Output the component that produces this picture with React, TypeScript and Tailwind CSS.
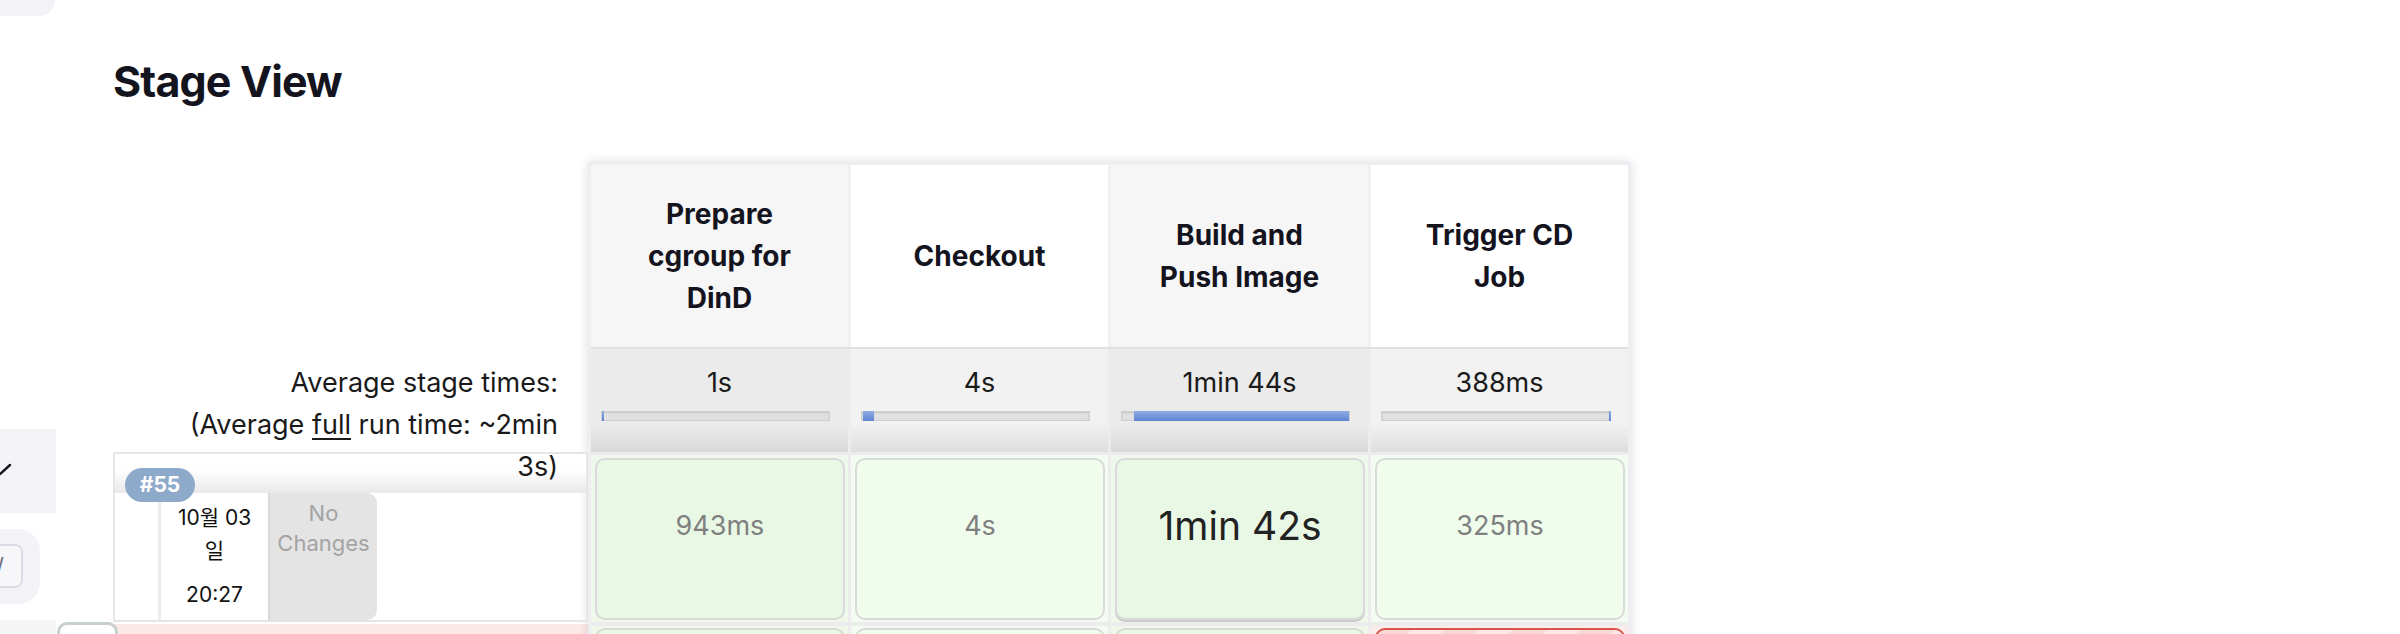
import React from 'react';

type Stage = {
  name: React.ReactNode;
  avg: string;
  barLeft: number;
  barWidth: number;
  run: string;
  big?: boolean;
  dark: boolean;
};

const STAGES: Stage[] = [
  { name: <>Prepare<br />cgroup for<br />DinD</>, avg: '1s', barLeft: 0, barWidth: 2, run: '943ms', dark: true },
  { name: 'Checkout', avg: '4s', barLeft: 1, barWidth: 11, run: '4s', dark: false },
  { name: <>Build and<br />Push Image</>, avg: '1min 44s', barLeft: 12, barWidth: 215, run: '1min 42s', big: true, dark: true },
  { name: <>Trigger CD<br />Job</>, avg: '388ms', barLeft: 227, barWidth: 2, run: '325ms', dark: false },
];

function Sidebar() {
  return (
    <aside className="flex w-[56px] shrink-0 flex-col">
      <div className="h-[16px] w-[55px] rounded-br-[16px] bg-[#f2f2f7]" />
      <div className="mt-[413px] flex h-[84px] w-[56px] items-center bg-[#f2f2f7]">
        <svg width="12" height="14" viewBox="0 0 12 14" className="-mt-[2px]">
          <path d="M0 11 L10 2" stroke="#14141f" strokeWidth="2.4" strokeLinecap="round" />
        </svg>
      </div>
      <div className="mt-[16px] h-[75px] w-[40px] rounded-r-[22px] bg-[#f2f2f7] pt-[15px]">
        <div className="flex h-[44px] w-[23px] items-center overflow-hidden rounded-r-[8px] border-2 border-l-0 border-[#dcdce6] bg-[#f7f7fa] text-[22px] leading-none text-[#6b6b7a]">
          <span className="-ml-[4px]">/</span>
        </div>
      </div>
      <div className="mt-[16px] h-[14px] w-[56px] bg-[#f5f5f5]" />
    </aside>
  );
}

function Bar({ left, width }: { left: number; width: number }) {
  return (
    <div className="relative ml-[10px] mt-[7px] h-[10px] w-[229px] border border-[#cfcfcf] bg-[#e0e0e0] shadow-[inset_0_1px_2px_rgba(0,0,0,0.12)]">
      <div
        className="absolute top-[-1px] h-[10px] bg-[linear-gradient(to_bottom,#8fabe2,#5f84d3)]"
        style={{ left, width }}
      />
    </div>
  );
}

export default function App() {
  return (
    <div className="relative h-[634px] w-[2400px] overflow-hidden bg-white font-['Inter','Noto_Sans_CJK_KR',sans-serif] text-[#14141f]">
      <div className="flex">
        <Sidebar />
        <main className="pl-[57px]">
          <h2 className="mt-[53px] text-[43px] font-bold leading-[56px] tracking-[-0.02em]">Stage View</h2>

          <div className="mt-[53px] flex items-start">
            {/* left label column */}
            <div className="w-[475px] shrink-0">
              <div className="h-[185px]" />
              <div className="relative z-10 h-[105px] pr-[30px] pt-[15px] text-right text-[27px] leading-[42px] text-[#1a1a1a]">
                Average stage times:
                <br />
                (Average <span className="underline underline-offset-[4px]">full</span> run time: ~2min
                <br />
                3s)
              </div>
              <div className="relative flex h-[170px] flex-col border-2 border-[#e6e6e6]">
                <div className="h-[39px] bg-[linear-gradient(to_bottom,#ffffff_40%,#e9e9e9)]" />
                <span className="absolute left-[10px] top-[14px] z-10 flex h-[34px] w-[70px] items-center justify-center rounded-full bg-[#8eaacb] text-[21px] font-bold text-white">
                  #55
                </span>
                <div className="flex flex-1 pl-[43px]">
                  <div className="w-[110px] border-l-[3px] border-[#ececec] bg-white pt-[8px] text-center text-[21px] text-[#111]">
                    <div className="leading-[33px]">10월 03</div>
                    <div className="leading-[33px]">일</div>
                    <div className="mt-[11px] leading-[33px]">20:27</div>
                  </div>
                  <div className="w-[109px] rounded-r-[10px] border-l-2 border-[#d8d8d8] bg-[#e4e4e4] pt-[5px] text-center text-[22px] leading-[30px] text-[#a3a3a3]">
                    No
                    <br />
                    Changes
                  </div>
                </div>
              </div>
              <div className="mt-[2px] h-[20px] bg-[#fde8e8]" />
            </div>

            {/* stage columns */}
            <div className="w-[1043px] shrink-0 border-[3px] border-[#eeeef2] bg-[#ececec] shadow-[0_0_10px_rgba(0,0,0,0.14)]">
              <div className="grid h-[182px] grid-cols-4 gap-x-[3px] bg-[#f1f1f1]">
                {STAGES.map((s, i) => (
                  <div
                    key={i}
                    className={`flex items-center justify-center text-center text-[28px] font-bold leading-[42px] ${s.dark ? 'bg-[#f6f6f6]' : 'bg-white'}`}
                  >
                    <div>{s.name}</div>
                  </div>
                ))}
              </div>
              <div className="grid h-[105px] grid-cols-4 gap-x-[3px] border-t-2 border-[#e0e0e0]">
                {STAGES.map((s, i) => (
                  <div
                    key={i}
                    className={`pt-[13px] ${s.dark ? 'bg-[linear-gradient(to_bottom,#ebebeb_72%,#d9d9d9)]' : 'bg-[linear-gradient(to_bottom,#f2f2f2_72%,#dedede)]'}`}
                  >
                    <div className="text-center text-[27px] leading-[42px] text-[#1a1a1a]">{s.avg}</div>
                    <Bar left={s.barLeft} width={s.barWidth} />
                  </div>
                ))}
              </div>
              <div className="mt-[3px] grid h-[167px] grid-cols-4 gap-x-[3px]">
                {STAGES.map((s, i) => (
                  <div key={i} className={`pb-[2px] pl-[4px] pr-[3px] pt-[3px] ${s.dark ? 'bg-[#eef8eb]' : 'bg-[#f3fcf0]'}`}>
                    <div
                      className={`h-full rounded-[10px] border-2 border-[#d9d9d9] pt-[45px] text-center ${s.dark ? 'bg-[#e9f8e5]' : 'bg-[#f0fdec]'} ${s.big ? 'shadow-[0_2px_0_#cccccc]' : ''}`}
                    >
                      {s.big ? (
                        <span className="text-[39px] leading-[42px] text-[#222]">{s.run}</span>
                      ) : (
                        <span className="text-[27px] leading-[42px] text-[#808080]">{s.run}</span>
                      )}
                    </div>
                  </div>
                ))}
              </div>
              <div className="mt-[4px] grid h-[40px] grid-cols-4 gap-x-[3px]">
                {STAGES.map((s, i) => (
                  <div key={i} className={`pl-[4px] pr-[3px] pt-[2px] ${i === 3 ? 'bg-[#fbecea]' : s.dark ? 'bg-[#eef8eb]' : 'bg-[#f3fcf0]'}`}>
                    {i === 3 ? (
                      <div className="h-full rounded-t-[10px] border-2 border-b-0 border-[#d9534f] bg-[repeating-linear-gradient(135deg,#f9d9d6_0,#f9d9d6_24px,#fbe7e5_24px,#fbe7e5_48px)]" />
                    ) : (
                      <div className={`h-full rounded-t-[10px] border-2 border-b-0 border-[#d9d9d9] ${s.dark ? 'bg-[#e9f8e5]' : 'bg-[#f0fdec]'}`} />
                    )}
                  </div>
                ))}
              </div>
            </div>
          </div>
        </main>
      </div>
      <div className="absolute left-[57px] top-[622px] h-[20px] w-[61px] rounded-t-[10px] border-[3px] border-b-0 border-[#c8cfcf] bg-white" />
    </div>
  );
}
